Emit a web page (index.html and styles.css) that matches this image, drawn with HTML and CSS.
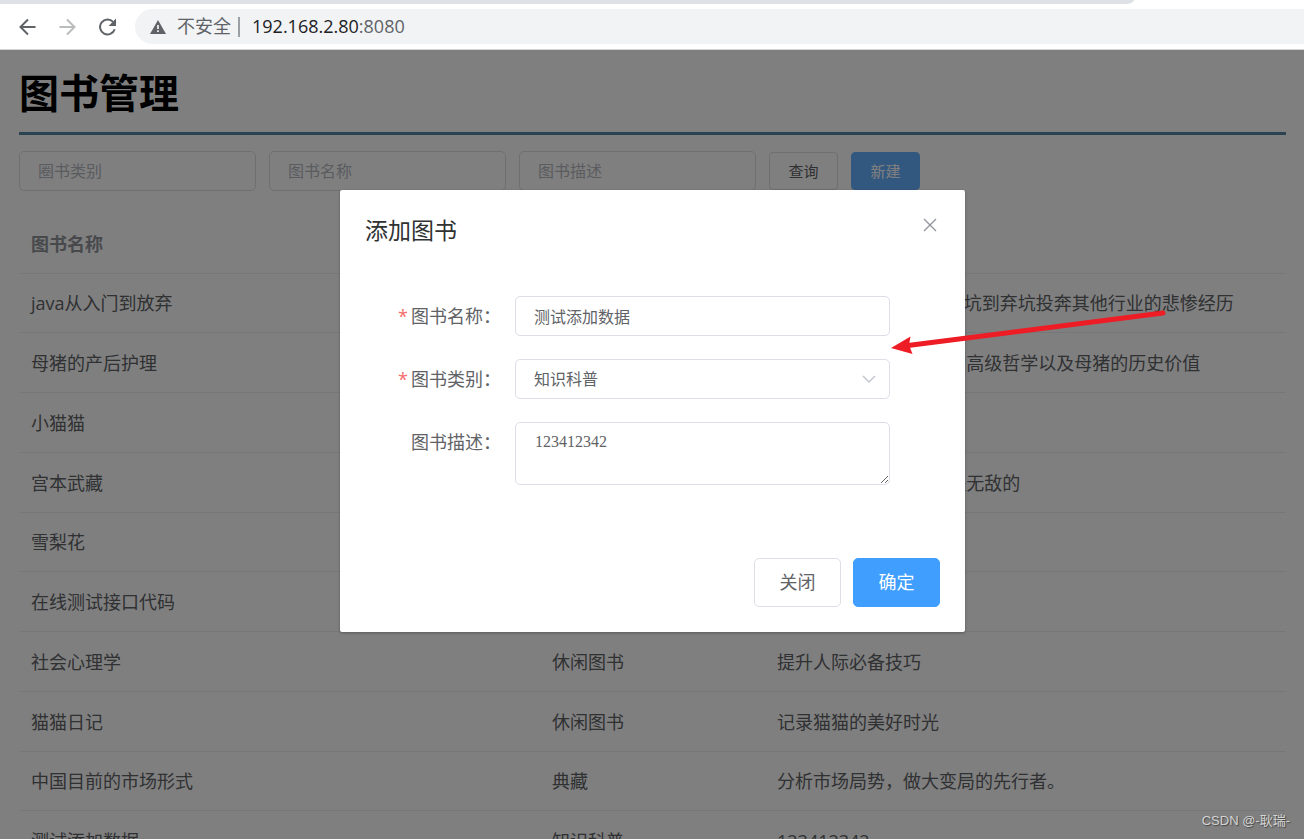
FILE: index.html
```html
<!DOCTYPE html>
<html lang="zh-CN">
<head>
<meta charset="utf-8">
<title>图书管理</title>
<link rel="stylesheet" href="styles.css">
</head>
<body>
<header class="browser">
  <div class="tab-strip"></div>
  <div class="toolbar">
    <nav class="nav-buttons">
      <button type="button" class="nav-button" aria-label="后退">
        <svg width="18" height="18" viewBox="0 0 18 18"><path d="M17.500 9H2.500M10 1.500L2.500 9l7.500 7.500" fill="none" stroke="#5f6368" stroke-width="2"/></svg>
      </button>
      <button type="button" class="nav-button" aria-label="前进" disabled>
        <svg width="18" height="18" viewBox="0 0 18 18"><path d="M1.500 9h15M9 1.500L16.500 9 9 16.500" fill="none" stroke="#babcbe" stroke-width="2"/></svg>
      </button>
      <button type="button" class="nav-button" aria-label="重新加载">
        <svg width="18" height="18" viewBox="0 0 18 18"><path d="M16.700 11.300A7.500 7.500 0 1 1 15.100 3.900" fill="none" stroke="#5f6368" stroke-width="2"/><path d="M18 0.500v7.400h-7.400z" fill="#5f6368"/></svg>
      </button>
    </nav>
    <div class="omnibox">
      <svg class="warning-icon" width="16" height="14" viewBox="0 0 16 14"><path d="M8 0l8 14H0z" fill="#5f6368"/><path d="M7.200 5h1.600v4H7.200zM7.200 10.300h1.600v1.600H7.200z" fill="#fff"/></svg>
      <span class="security">不安全</span>
      <span class="divider"></span>
      <span class="url">192.168.2.80<span class="port">:8080</span></span>
    </div>
  </div>
</header>

<main class="viewport">
  <div class="page">
    <h1 class="page-title">图书管理</h1>
    <form class="search">
      <input class="field search-field" type="text" placeholder="圈书类别" aria-label="图书类别">
      <input class="field search-field" type="text" placeholder="图书名称" aria-label="图书名称">
      <input class="field search-field" type="text" placeholder="图书描述" aria-label="图书描述">
      <button type="button" class="button button-small">查询</button>
      <button type="button" class="button button-small button-primary button-active">新建</button>
    </form>
    <table class="books">
      <colgroup><col class="col-name"><col class="col-type"><col></colgroup>
      <thead>
        <tr><th>图书名称</th><th>图书类别</th><th>图书描述</th></tr>
      </thead>
      <tbody>
        <tr><td>java从入门到放弃</td><td>知识科普</td><td>讲述java程序员, 如何被坑到弃坑投奔其他行业的悲惨经历</td></tr>
        <tr><td>母猪的产后护理</td><td>知识科普</td><td>母猪的产后护理, 其中的高级哲学以及母猪的历史价值</td></tr>
        <tr><td>小猫猫</td><td>休闲图书</td><td>可爱的小猫猫</td></tr>
        <tr><td>宫本武藏</td><td>典藏</td><td>一代剑圣宫本武藏, 他是无敌的</td></tr>
        <tr><td>雪梨花</td><td>休闲图书</td><td>雪白的梨花</td></tr>
        <tr><td>在线测试接口代码</td><td>知识科普</td><td></td></tr>
        <tr><td>社会心理学</td><td>休闲图书</td><td>提升人际必备技巧</td></tr>
        <tr><td>猫猫日记</td><td>休闲图书</td><td>记录猫猫的美好时光</td></tr>
        <tr><td>中国目前的市场形式</td><td>典藏</td><td>分析市场局势，做大变局的先行者。</td></tr>
        <tr><td>测试添加数据</td><td>知识科普</td><td>123412342</td></tr>
      </tbody>
    </table>
  </div>

  <div class="mask">
    <section class="dialog" role="dialog" aria-labelledby="dialog-title">
      <header class="dialog-header">
        <h2 class="dialog-title" id="dialog-title">添加图书</h2>
        <button type="button" class="close" aria-label="关闭对话框">
          <svg width="14" height="14" viewBox="0 0 14 14"><path d="M1 1l12 12M13 1L1 13" fill="none" stroke="#909399" stroke-width="1.300"/></svg>
        </button>
      </header>
      <form class="dialog-form">
        <div class="form-row">
          <label class="label required" for="book-name">图书名称：</label>
          <input class="field" id="book-name" type="text" value="测试添加数据">
        </div>
        <div class="form-row">
          <label class="label required" for="book-type">图书类别：</label>
          <div class="select-wrap">
            <select class="field" id="book-type"><option>知识科普</option><option>休闲图书</option><option>典藏</option></select>
            <svg class="chevron" width="14" height="8" viewBox="0 0 14 8"><path d="M1 1l6 6 6-6" fill="none" stroke="#c0c4cc" stroke-width="1.400"/></svg>
          </div>
        </div>
        <div class="form-row">
          <label class="label" for="book-desc">图书描述：</label>
          <textarea class="field textarea" id="book-desc">123412342</textarea>
        </div>
      </form>
      <footer class="dialog-footer">
        <button type="button" class="button">关闭</button>
        <button type="button" class="button button-primary">确定</button>
      </footer>
      <svg class="arrow" width="280" height="50" viewBox="0 0 280 50"><path d="M273 8L18 40.500" stroke="#ee1c25" stroke-width="5" stroke-linecap="round"/><path d="M1 43L20.500 31.500l-1.500 8.500 3.500 9z" fill="#ee1c25"/></svg>
    </section>
  </div>
  <div class="watermark">CSDN @-耿瑞-</div>
</main>
</body>
</html>
```
FILE: styles.css
```css
* {
  box-sizing: border-box;
}

body {
  margin: 0;
  height: 100vh;
  display: flex;
  flex-direction: column;
  overflow: hidden;
  background: #fff;
  color: #606266;
  font-family: "Open Sans", "Noto Sans CJK SC", sans-serif;
  font-size: 18px;
  font-weight: 390;
  line-height: 28px;
}

button,
input,
select,
textarea {
  font: inherit;
  color: inherit;
}

/* Browser bar */
.browser {
  flex: none;
  height: 50px;
  border-bottom: 1px solid #d2d3d4;
}

.tab-strip {
  width: 87%;
  height: 4px;
  background: #dee1e6;
  border-bottom-right-radius: 8px 4px;
}

.toolbar {
  display: flex;
  align-items: center;
  padding: 5px 0 5px 18px;
}

.nav-buttons {
  display: flex;
  gap: 22px;
  width: 117px;
}

.nav-button {
  display: flex;
  padding: 0;
  border: 0;
  background: none;
}

.omnibox {
  flex: 1;
  display: flex;
  align-items: center;
  height: 35px;
  padding-left: 15px;
  background: #f1f3f4;
  border-radius: 18px 0 0 18px;
}

.security,
.url {
  padding-bottom: 2px;
}

.security {
  margin-left: 11px;
  color: #5f6368;
}

.divider {
  width: 2px;
  height: 20px;
  margin: 0 12px 0 7px;
  background: #9aa0a6;
}

.url {
  color: #202124;
}

.port {
  color: #5f6368;
}

/* Page */
.viewport {
  flex: 1;
  position: relative;
  min-height: 0;
  overflow: hidden;
}

.page {
  padding: 14px 18px 0 19px;
}

.page-title {
  margin: 0;
  padding-bottom: 10px;
  border-bottom: 3px solid #5684a0;
  color: #000;
  font-size: 40px;
  line-height: 58px;
}

.search {
  display: flex;
  align-items: center;
  gap: 13px;
  padding-top: 16px;
}

.field {
  width: 100%;
  height: 40px;
  padding: 0 18px;
  border: 1px solid #dcdfe6;
  border-radius: 5px;
  background: #fff;
  font-size: 16px;
}

.field::placeholder {
  color: #b4b8c0;
  opacity: 1;
}

.search-field {
  width: 237px;
}

.button {
  height: 49px;
  min-width: 87px;
  padding: 0 24px 2px;
  border: 1px solid #dcdfe6;
  border-radius: 5px;
  background: #fff;
}

.button-small {
  height: 38px;
  min-width: 69px;
  padding: 0 18px;
  border-radius: 4px;
  font-size: 15px;
}

.button-primary {
  border-color: #409eff;
  background: #409eff;
  color: #fff;
}

.button-active {
  border-color: #66b1ff;
  background: #66b1ff;
}

.books {
  width: 100%;
  margin-top: 24px;
  border-collapse: separate;
  border-spacing: 0;
  table-layout: fixed;
}

.col-name {
  width: 521px;
}

.col-type {
  width: 225px;
}

.books th,
.books td {
  height: 60px;
  padding: 0 12px;
  border-bottom: 1px solid #ebeef5;
  text-align: left;
  white-space: nowrap;
}

.books th {
  height: 59px;
  color: #909399;
  font-weight: 700;
}

.books tbody tr:nth-child(4n + 1) td {
  height: 59px;
}

/* Dialog */
.mask {
  position: absolute;
  inset: 0;
  display: flex;
  justify-content: center;
  align-items: flex-start;
  padding: 140px 0 0 1px;
  background: rgba(0, 0, 0, 0.5);
}

.dialog {
  position: relative;
  width: 90%;
  max-width: 625px;
  background: #fff;
  border-radius: 2px;
  box-shadow: 0 1px 3px rgba(0, 0, 0, 0.3);
}

.dialog-header {
  display: flex;
  justify-content: space-between;
  align-items: flex-start;
  padding: 25px 25px 13px;
}

.dialog-title {
  margin: 0;
  color: #303133;
  font-size: 23px;
  font-weight: 390;
  line-height: 30px;
}

.close {
  display: flex;
  padding: 3px;
  border: 0;
  background: none;
}

.dialog-form {
  display: flex;
  flex-direction: column;
  gap: 23px;
  padding: 38px 75px 38px 50px;
}

.form-row {
  display: flex;
  align-items: flex-start;
}

.label {
  flex: none;
  width: 125px;
  padding-right: 14px;
  text-align: right;
  line-height: 40px;
}

.required::before {
  content: "*";
  margin-right: 3px;
  color: #f56c6c;
}

.select-wrap {
  flex: 1;
  display: flex;
  position: relative;
}

select.field {
  appearance: none;
}

.chevron {
  position: absolute;
  top: 16px;
  right: 14px;
  pointer-events: none;
}

.textarea {
  height: 63px;
  padding: 7px 19px;
  resize: vertical;
  font-family: "Liberation Serif", serif;
  line-height: 24px;
}

.dialog-footer {
  display: flex;
  justify-content: flex-end;
  gap: 12px;
  padding: 35px 25px 25px;
}

.arrow {
  position: absolute;
  top: 115px;
  left: calc(100% - 75px);
}

.watermark {
  position: absolute;
  right: 14px;
  bottom: 8px;
  color: #d4d4d4;
  font-family: "Liberation Sans", "Noto Sans CJK SC", sans-serif;
  font-size: 13px;
  line-height: 20px;
  text-shadow: 1px 1px 1px #444;
}
```
